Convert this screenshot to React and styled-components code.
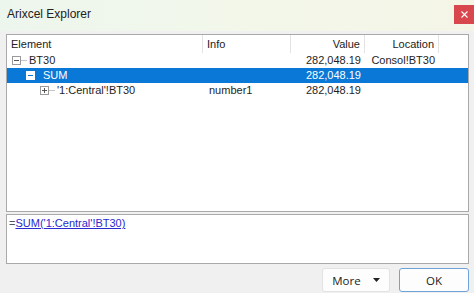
import React from "react";
import styled, { createGlobalStyle } from "styled-components";

const GlobalStyle = createGlobalStyle`
  html, body {
    margin: 0;
    padding: 0;
    background: #f0f0f0;
  }
  body {
    font-family: "Liberation Sans", Arial, sans-serif;
    color: #1e1e1e;
  }
`;

const Window = styled.div`
  width: 474px;
  height: 293px;
  display: flex;
  flex-direction: column;
  background: #f0f0f0;
  overflow: hidden;
`;

const TitleBar = styled.div`
  height: 31px;
  flex: none;
  display: flex;
  align-items: flex-start;
  background: linear-gradient(90deg, #edf6ed 0%, #f2f7ea 50%, #f4f5e6 100%);
`;

const Title = styled.span`
  font-size: 12px;
  line-height: 14px;
  margin: 7px 0 0 7px;
  color: #222;
`;

const CloseButton = styled.div`
  margin: 5px 0 0 auto;
  width: 20px;
  height: 19px;
  background: #d8474d;
  display: flex;
  align-items: center;
  justify-content: center;
`;

const Body = styled.div`
  flex: 1;
  display: flex;
  flex-direction: column;
  gap: 2px;
  padding: 3px 5px 1px 6px;
`;

const TreePanel = styled.div`
  height: 178px;
  box-sizing: border-box;
  border: 1px solid #a9a9a9;
  background: #fff;
`;

const cols = "196px 88px 74px 74px 1fr";

const HeaderRow = styled.div`
  display: grid;
  grid-template-columns: ${cols};
  height: 18px;
`;

const HeaderCell = styled.div`
  font-size: 11px;
  line-height: 18px;
  padding: 0 ${(p) => (p.$right ? "4px" : "0")} 0 ${(p) => (p.$right ? "0" : "4px")};
  text-align: ${(p) => (p.$right ? "right" : "left")};
  border-right: ${(p) => (p.$last ? "none" : "1px solid #e3e3e3")};
  color: #222;
`;

const Row = styled.div`
  display: grid;
  grid-template-columns: ${cols};
  height: 15px;
  background: ${(p) => (p.$selected ? "#0a78d6" : "transparent")};
  color: ${(p) => (p.$selected ? "#fff" : "#1e1e1e")};
`;

const Cell = styled.div`
  font-size: 11px;
  line-height: 15px;
  white-space: nowrap;
  text-align: ${(p) => (p.$right ? "right" : "left")};
  padding: ${(p) => (p.$right ? "0 4px 0 0" : "0 0 0 6px")};
`;

const TreeCell = styled.div`
  display: flex;
  align-items: center;
  font-size: 11px;
  line-height: 15px;
  white-space: nowrap;
  padding-left: ${(p) => 5 + p.$level * 14}px;
`;

const Connector = styled.span`
  width: 6px;
  border-top: 1px solid ${(p) => (p.$hidden ? "transparent" : "#c4c4c4")};
  margin: 0 2px 0 0;
`;

const FormulaPanel = styled.div`
  height: 50px;
  box-sizing: border-box;
  border: 1px solid #a9a9a9;
  background: #fff;
  padding: 1px 0 0 2px;
  font-size: 11px;
  line-height: 14px;
  color: #555;
`;

const FormulaLink = styled.span`
  color: #2a2ad0;
  text-decoration: underline;
`;

const ButtonRow = styled.div`
  margin-top: 2px;
  display: flex;
  justify-content: flex-end;
  gap: 9px;
`;

const Button = styled.div`
  height: 24px;
  width: ${(p) => p.$width}px;
  box-sizing: border-box;
  border: 1px solid ${(p) => (p.$primary ? "#6ea3d8" : "#e2e2e2")};
  border-radius: 3px;
  background: #fdfdfd;
  font-family: "Open Sans", "Noto Sans", sans-serif;
  font-size: 11.5px;
  color: #222;
  display: flex;
  align-items: center;
  justify-content: center;
  gap: 12px;
`;

const Expander = ({ open, selected }) => (
  <svg width="9" height="9" viewBox="0 0 9 9" style={{ flex: "none" }}>
    <rect
      x="0.5"
      y="0.5"
      width="8"
      height="8"
      fill="#fff"
      stroke={selected ? "#fff" : "#9a9a9a"}
    />
    <line x1="2" y1="4.5" x2="7" y2="4.5" stroke={selected ? "#0a78d6" : "#555"} />
    {!open && <line x1="4.5" y1="2" x2="4.5" y2="7" stroke="#555" />}
  </svg>
);

const rows = [
  { level: 0, name: "BT30", info: "", value: "282,048.19", loc: "Consol!BT30", open: true },
  { level: 1, name: "SUM", info: "", value: "282,048.19", loc: "", open: true, selected: true },
  { level: 2, name: "'1:Central'!BT30", info: "number1", value: "282,048.19", loc: "", open: false },
];

export default function App() {
  return (
    <Window>
      <GlobalStyle />
      <TitleBar>
        <Title>Arixcel Explorer</Title>
        <CloseButton>
          <svg width="7" height="7" viewBox="0 0 7 7">
            <path d="M0.5 0.5l6 6M6.5 0.5l-6 6" stroke="#fff" strokeWidth="1.1" />
          </svg>
        </CloseButton>
      </TitleBar>
      <Body>
        <TreePanel>
          <HeaderRow>
            <HeaderCell>Element</HeaderCell>
            <HeaderCell>Info</HeaderCell>
            <HeaderCell $right>Value</HeaderCell>
            <HeaderCell $right>Location</HeaderCell>
            <HeaderCell $last />
          </HeaderRow>
          {rows.map((r) => (
            <Row key={r.name} $selected={r.selected}>
              <TreeCell $level={r.level}>
                <Expander open={r.open} selected={r.selected} />
                <Connector $hidden={r.selected} />
                {r.name}
              </TreeCell>
              <Cell>{r.info}</Cell>
              <Cell $right>{r.value}</Cell>
              <Cell $right>{r.loc}</Cell>
              <Cell />
            </Row>
          ))}
        </TreePanel>
        <FormulaPanel>
          =<FormulaLink>SUM('1:Central'!BT30)</FormulaLink>
        </FormulaPanel>
        <ButtonRow>
          <Button $width={68}>
            <span>More</span>
            <svg width="7" height="4" viewBox="0 0 7 4">
              <path d="M0 0h7L3.5 4z" fill="#222" />
            </svg>
          </Button>
          <Button $width={70} $primary>
            OK
          </Button>
        </ButtonRow>
      </Body>
    </Window>
  );
}
